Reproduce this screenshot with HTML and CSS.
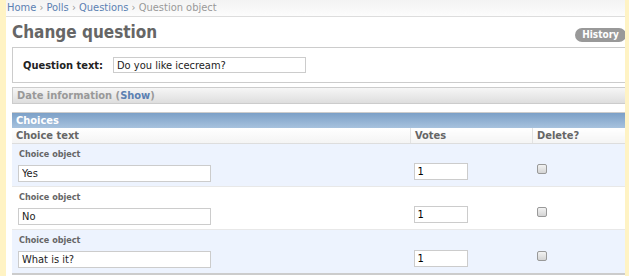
FILE: index.html
```html
<!DOCTYPE html>
<html lang="en">
<head>
    <meta charset="UTF-8">
    <title>Change question</title>
    <link rel="stylesheet" href="styles.css">
</head>
<body>
    <div class="page">
        <div class="breadcrumbs">
            <a href="#">Home</a> &rsaquo; <a href="#">Polls</a> &rsaquo; <a href="#">Questions</a> &rsaquo; Question object
        </div>
        <div class="content">
            <div class="title-row">
                <h1>Change question</h1>
                <a class="history" href="#">History</a>
            </div>

            <fieldset class="module">
                <div class="form-row">
                    <label>Question text:</label>
                    <input class="vtext" type="text" value="Do you like icecream?">
                </div>
            </fieldset>

            <fieldset class="module collapsed">
                <h2>Date information (<a href="#">Show</a>)</h2>
            </fieldset>

            <div class="inline">
                <h2>Choices</h2>
                <table>
                    <thead>
                        <tr>
                            <th class="col-text">Choice text</th>
                            <th class="col-votes">Votes</th>
                            <th class="col-delete">Delete?</th>
                        </tr>
                    </thead>
                    <tbody>
                        <tr class="row1">
                            <td>
                                <p class="original">Choice object</p>
                                <input class="vtext" type="text" value="Yes">
                            </td>
                            <td class="bottom"><input class="vint" type="text" value="1"></td>
                            <td class="bottom"><input type="checkbox"></td>
                        </tr>
                        <tr class="row2">
                            <td>
                                <p class="original">Choice object</p>
                                <input class="vtext" type="text" value="No">
                            </td>
                            <td class="bottom"><input class="vint" type="text" value="1"></td>
                            <td class="bottom"><input type="checkbox"></td>
                        </tr>
                        <tr class="row1">
                            <td>
                                <p class="original">Choice object</p>
                                <input class="vtext" type="text" value="What is it?">
                            </td>
                            <td class="bottom"><input class="vint" type="text" value="1"></td>
                            <td class="bottom"><input type="checkbox"></td>
                        </tr>
                    </tbody>
                </table>
            </div>
        </div>
    </div>
</body>
</html>
```

FILE: styles.css
```css
body {
    margin: 0;
    background-color: #fff3c4;
    font-family: "DejaVu Sans Condensed", "DejaVu Sans", Verdana, sans-serif;
    font-size: 11px;
    color: #333;
}

a {
    color: #5b80b2;
    text-decoration: none;
}

.page {
    margin: 0 4px 0 6px;
    height: 276px;
    background-color: #fff;
    overflow: hidden;
}

.breadcrumbs {
    height: 16px;
    line-height: 16px;
    padding-left: 1px;
    color: #999;
    background: linear-gradient(#f3f3f3, #fcfcfc);
    border-bottom: 1px solid #ddd;
}

.content {
    padding-left: 6px;
}

.title-row {
    display: flex;
    justify-content: space-between;
    align-items: center;
    height: 30px;
}

h1 {
    margin: 0;
    font-size: 17px;
    color: #666;
}

.history {
    margin: 6px -1px 0 0;
    padding: 0 7px;
    height: 14px;
    line-height: 14px;
    border-radius: 7px;
    background-color: #999;
    color: #fff;
    font-size: 10px;
    font-weight: bold;
}

fieldset.module {
    margin: 0;
    padding: 0;
    border: 1px solid #ccc;
    border-right: none;
    min-width: 0;
}

.form-row {
    display: flex;
    align-items: center;
    height: 34px;
    padding-left: 10px;
}

.form-row label {
    flex: 0 0 90px;
    white-space: nowrap;
    font-weight: bold;
    font-size: 11px;
    color: #222;
}

input.vtext {
    width: 193px;
    height: 17px;
    box-sizing: border-box;
    border: 1px solid #ccc;
    padding: 0 3px;
    font-family: "DejaVu Sans Condensed", "DejaVu Sans", Verdana, sans-serif;
    font-size: 11px;
    color: #222;
    margin: 0;
}

input.vint {
    width: 54px;
    height: 17px;
    box-sizing: border-box;
    border: 1px solid #ccc;
    padding: 0 3px;
    font-family: "DejaVu Sans Condensed", "DejaVu Sans", Verdana, sans-serif;
    font-size: 11px;
    margin: 0;
}

.form-row input.vtext {
    width: 193px;
    height: 16px;
}

fieldset.collapsed {
    margin-top: 4px;
}

fieldset.collapsed h2 {
    margin: 0;
    height: 15px;
    line-height: 15px;
    padding-left: 4px;
    font-size: 11px;
    color: #999;
    background: linear-gradient(#f6f6f6, #dedede);
}

.inline {
    margin-top: 8px;
    border-top: 1px solid #ccc;
    border-bottom: 2px solid #ccc;
}

.inline h2 {
    margin: 0;
    height: 15px;
    line-height: 15px;
    padding-left: 4px;
    font-size: 11px;
    color: #fff;
    background: linear-gradient(#7ca0c7, #a7c2de);
}

table {
    width: 100%;
    border-collapse: collapse;
}

th {
    height: 15px;
    padding: 0 4px;
    text-align: left;
    font-size: 11px;
    color: #666;
    background: linear-gradient(#fff, #f4f4f4);
    border-bottom: 1px solid #ddd;
}

th.col-votes,
th.col-delete {
    border-left: 1px solid #e2e2e2;
}

.col-text {
    width: 390px;
}

.col-votes {
    width: 113px;
}

td {
    height: 43px;
    padding: 0 0 0 6px;
    box-sizing: border-box;
}

td.bottom {
    vertical-align: bottom;
    padding: 0 0 6px 3px;
}

td.bottom input[type="checkbox"] {
    appearance: none;
    display: block;
    width: 10px;
    height: 10px;
    margin: 0 0 6px 1px;
    border: 1px solid #999;
    border-radius: 2px;
    background: linear-gradient(#f2f2f2, #d4d4d4);
}

tr.row1 td {
    background-color: #edf3fe;
}

tr.row2 td {
    background-color: #fff;
}

tbody tr + tr td {
    border-top: 1px solid #e8e8e8;
}

p.original {
    margin: 0 0 6px 1px;
    font-size: 9px;
    font-weight: bold;
    color: #666;
}
```
